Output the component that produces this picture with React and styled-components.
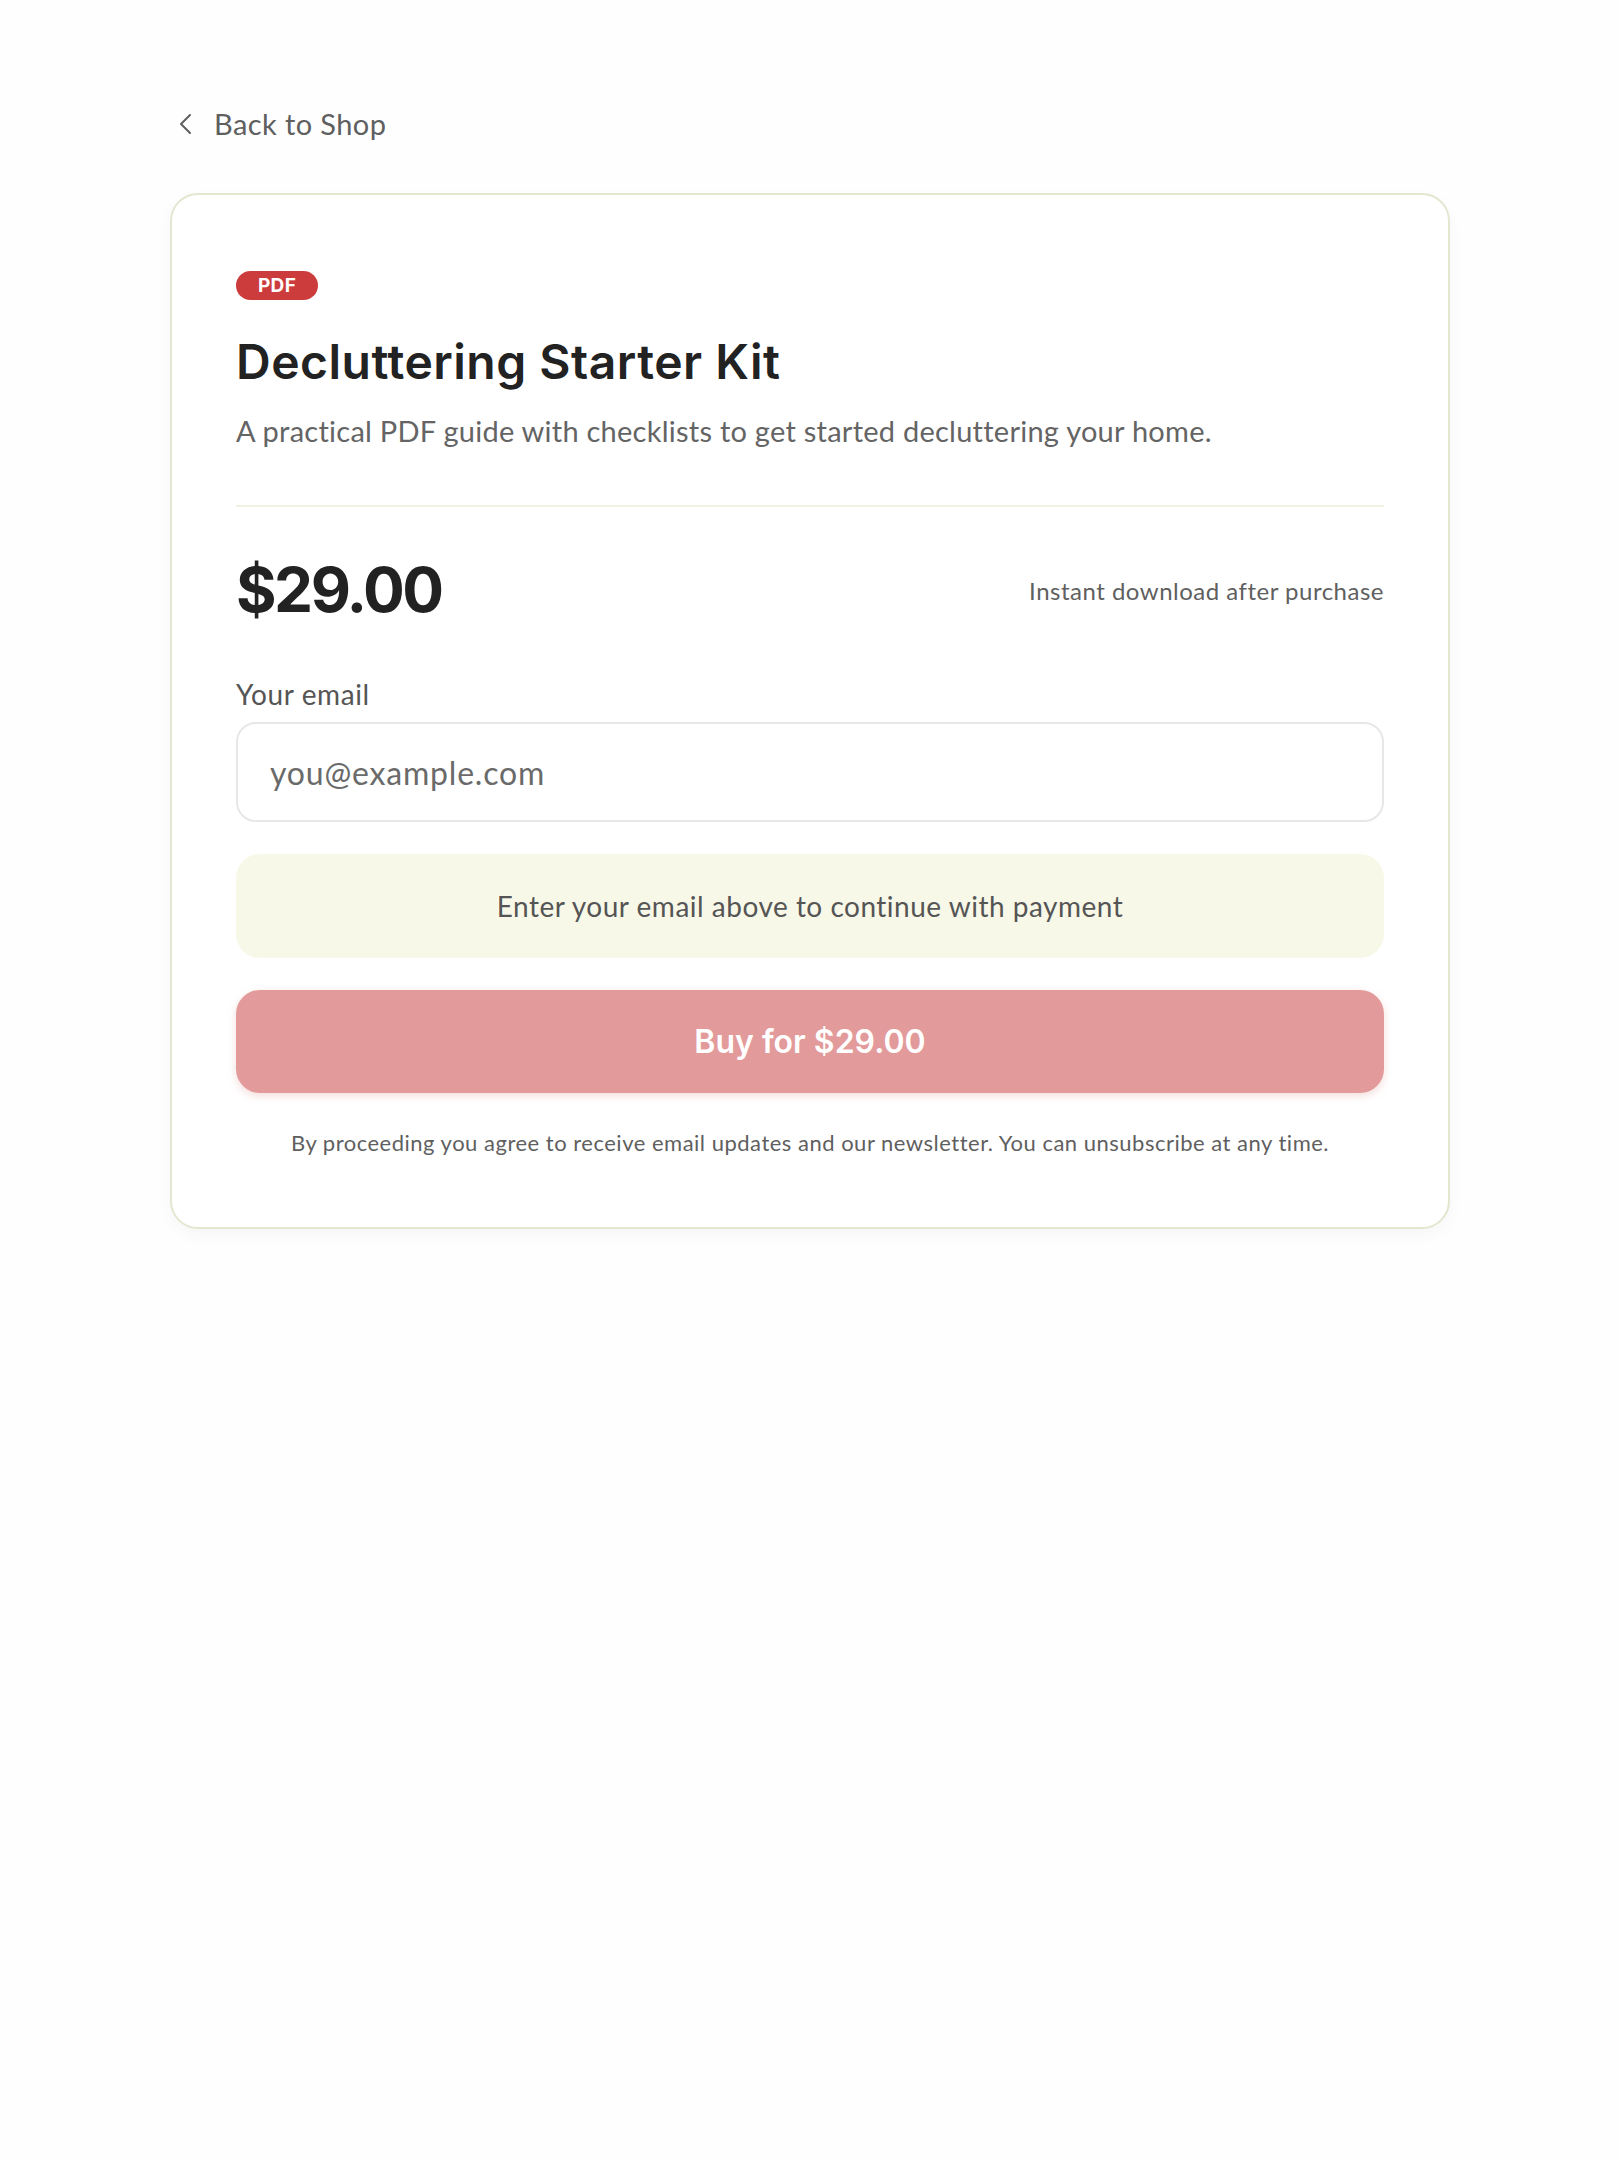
import React from "react";
import styled, { createGlobalStyle } from "styled-components";

const GlobalStyle = createGlobalStyle`
  html, body {
    margin: 0;
    padding: 0;
    background: #fefefe;
  }
  body {
    font-family: Lato, "Open Sans", sans-serif;
    color: #222;
  }
  * {
    box-sizing: border-box;
  }
`;

const Page = styled.div`
  max-width: 1280px;
  margin: 0 auto;
  padding: 103px 0 80px;
`;

const BackLink = styled.a`
  display: inline-flex;
  align-items: center;
  gap: 15px;
  margin-left: 5px;
  color: #5f5f5f;
  font-size: 29px;
  letter-spacing: 0.4px;
  line-height: 42px;
  text-decoration: none;
  cursor: pointer;

  svg {
    width: 24px;
    height: 24px;
  }
`;

const Card = styled.div`
  margin-top: 48px;
  padding: 76px 64px 68px;
  border: 2px solid #e4e6d0;
  border-radius: 28px;
  background: #fff;
  box-shadow: 0 6px 16px rgba(0, 0, 0, 0.035);
`;

const Badge = styled.span`
  display: inline-flex;
  align-items: center;
  height: 29px;
  padding: 0 22px;
  border-radius: 15px;
  background: #cc3c3c;
  color: #fff;
  font-family: Inter, "Noto Sans", sans-serif;
  font-size: 19px;
  font-weight: 700;
  letter-spacing: 0.3px;
`;

const Title = styled.h1`
  margin: 33px 0 0;
  font-family: Inter, "Noto Sans", sans-serif;
  font-size: 48px;
  font-weight: 600;
  letter-spacing: 0.5px;
  line-height: 1.2;
  color: #222;
`;

const Description = styled.p`
  margin: 18px 0 0;
  font-size: 29px;
  letter-spacing: 0.25px;
  line-height: 1.5;
  color: #646464;
`;

const Divider = styled.hr`
  margin: 53px 0 0;
  border: 0;
  border-top: 2px solid #f0f1e2;
`;

const PriceRow = styled.div`
  display: flex;
  align-items: center;
  justify-content: space-between;
  margin-top: 52px;
`;

const Price = styled.div`
  font-family: Inter, "Noto Sans", sans-serif;
  font-size: 62px;
  font-weight: 700;
  letter-spacing: -2.5px;
  line-height: 1;
  color: #222;
`;

const Note = styled.span`
  font-size: 24px;
  letter-spacing: 0.5px;
  color: #5f5f5f;
`;

const Field = styled.label`
  display: flex;
  flex-direction: column;
  gap: 8px;
  margin-top: 54px;
`;

const FieldLabel = styled.span`
  font-size: 28px;
  letter-spacing: 0.6px;
  line-height: 1.4;
  color: #555;
`;

const Input = styled.input`
  height: 100px;
  padding: 0 32px;
  border: 2px solid #e7e7e7;
  border-radius: 20px;
  font-family: Lato, "Open Sans", sans-serif;
  font-size: 32px;
  letter-spacing: 0.8px;
  color: #333;
  outline: none;

  &::placeholder {
    color: #6a6a6a;
  }
`;

const Notice = styled.div`
  display: flex;
  align-items: center;
  justify-content: center;
  height: 104px;
  margin-top: 32px;
  border-radius: 24px;
  background: #f8f8e8;
  font-size: 28px;
  letter-spacing: 0.5px;
  color: #555;
`;

const BuyButton = styled.button`
  display: block;
  width: 100%;
  height: 103px;
  margin-top: 32px;
  border: 0;
  border-radius: 24px;
  background: #e39a9a;
  box-shadow: 0 3px 8px rgba(227, 154, 154, 0.35);
  color: #fff;
  font-family: Inter, "Noto Sans", sans-serif;
  font-size: 32px;
  font-weight: 600;
  cursor: not-allowed;
`;

const Fine = styled.p`
  margin: 33px 0 0;
  text-align: center;
  font-size: 22px;
  letter-spacing: 0.5px;
  line-height: 1.5;
  color: #5f5f5f;
`;

const ChevronLeft = () => (
  <svg viewBox="0 0 24 24" fill="none" stroke="currentColor" strokeWidth="2" strokeLinecap="round" strokeLinejoin="round">
    <path d="M15 3 6 12l9 9" />
  </svg>
);

const App = () => {
  return (
    <>
      <GlobalStyle />
      <Page>
        <BackLink>
          <ChevronLeft />
          Back to Shop
        </BackLink>
        <Card>
          <Badge>PDF</Badge>
          <Title>Decluttering Starter Kit</Title>
          <Description>
            A practical PDF guide with checklists to get started decluttering your home.
          </Description>
          <Divider />
          <PriceRow>
            <Price>$29.00</Price>
            <Note>Instant download after purchase</Note>
          </PriceRow>
          <Field>
            <FieldLabel>Your email</FieldLabel>
            <Input type="email" placeholder="you@example.com" />
          </Field>
          <Notice>Enter your email above to continue with payment</Notice>
          <BuyButton type="button">Buy for $29.00</BuyButton>
          <Fine>
            By proceeding you agree to receive email updates and our newsletter. You can unsubscribe at any time.
          </Fine>
        </Card>
      </Page>
    </>
  );
};

export default App;
